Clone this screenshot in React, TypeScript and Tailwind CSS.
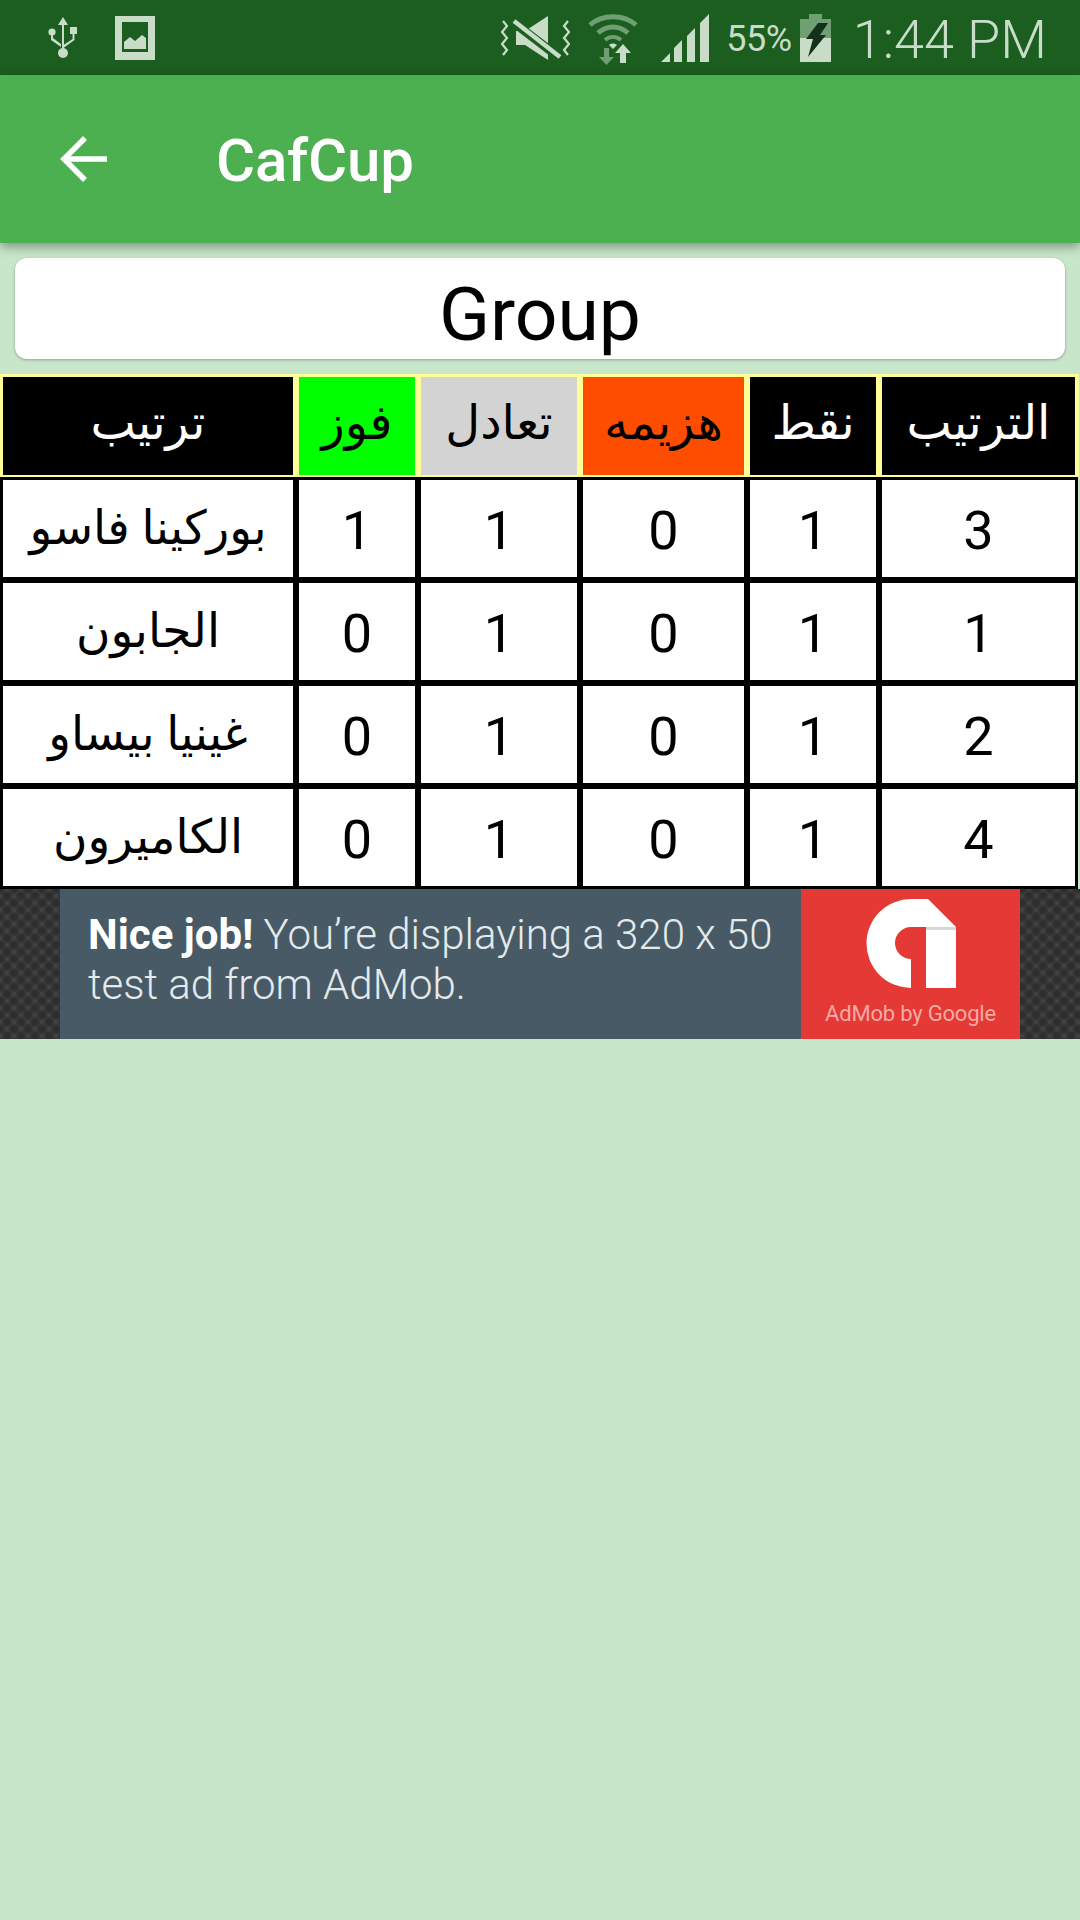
const COLS = "grid grid-cols-[290px_116px_156px_161px_126px_193px] gap-x-[6px]";
const FONT = "font-['Roboto','DejaVu_Sans',sans-serif]";

const HEADERS = [
  { label: "ترتيب", className: "bg-black text-white" },
  { label: "فوز", className: "bg-[#00ff00] text-black" },
  { label: "تعادل", className: "bg-[#d3d3d3] text-black" },
  { label: "هزيمه", className: "bg-[#ff4d00] text-black" },
  { label: "نقط", className: "bg-black text-white" },
  { label: "الترتيب", className: "bg-black text-white" },
];

const ROWS = [
  ["بوركينا فاسو", "1", "1", "0", "1", "3"],
  ["الجابون", "0", "1", "0", "1", "1"],
  ["غينيا بيساو", "0", "1", "0", "1", "2"],
  ["الكاميرون", "0", "1", "0", "1", "4"],
];

function UsbIcon() {
  return (
    <svg width="30" height="42" viewBox="0 0 30 42" fill="#c8dcc8">
      <path d="M14 6h2v26h-2z" />
      <path d="M15 0l5 8H10z" />
      <circle cx="15" cy="36" r="5" />
      <circle cx="4" cy="15" r="3.6" />
      <path d="M22 10h7v7h-7z" />
      <path d="M3 15h2v6l8 6v3L3 23zM24.500 16h2v7l-11 8v-3l9-6z" />
    </svg>
  );
}

function ImageIcon() {
  return (
    <svg width="40" height="44" viewBox="0 0 40 44">
      <path d="M0 0h40v44H0z" fill="#c8dcc8" />
      <path d="M7 6h26v30H7z" fill="#1b5e20" />
      <path d="M9 33v-7l6-5 5 4 7-6 4 3v11z" fill="#c8dcc8" />
    </svg>
  );
}

function MuteVibrateIcon() {
  return (
    <svg width="69" height="44" viewBox="0 0 69 44" fill="none">
      <path d="M15 15h9L47 0v44L24 29h-9z" fill="#c8dcc8" />
      <path d="M12 6l47 36" stroke="#1b5e20" strokeWidth="9" />
      <path d="M13 5l46 36" stroke="#c8dcc8" strokeWidth="4.500" />
      <path d="M2 5l4 5-5 6 5 6-5 6 5 6-4 5M67 5l-4 5 5 6-5 6 5 6-5 6 4 5" stroke="#c8dcc8" strokeWidth="2.200" />
    </svg>
  );
}

function WifiIcon() {
  return (
    <svg width="50" height="54" viewBox="0 0 50 54" fill="none">
      <path d="M2 14C14 3 36 3 48 14" stroke="#6f9f72" strokeWidth="5" />
      <path d="M10 22c9-8 21-8 30 0" stroke="#6f9f72" strokeWidth="5" />
      <path d="M17 29c5-4 11-4 16 0" stroke="#6f9f72" strokeWidth="4" />
      <path d="M21 34c2-2 6-2 8 0l-4 4z" fill="#c8dcc8" />
      <path d="M16 37h5v9h5l-7.500 8-7.500-8h5z" fill="#6f9f72" />
      <path d="M32 52v-10h-5l8-9 8 9h-5v10z" fill="#c8dcc8" />
    </svg>
  );
}

function SignalIcon() {
  return (
    <svg width="48" height="48" viewBox="0 0 48 48" fill="#c8dcc8">
      <path d="M0 48l9-9v9zM13 48V34l8-8v22zM26 48V22l8-8v34zM39 48V9l9-9v48z" />
    </svg>
  );
}

function BatteryIcon() {
  return (
    <svg width="31" height="48" viewBox="0 0 31 48">
      <path d="M9 0h13v5h9v43H0V5h9z" fill="#c8dcc8" />
      <path d="M9 0h13v5h9v19H0V5h9z" fill="#6f9f72" />
      <path d="M18 9h10l-8 12h6L8 43l5-18H6z" fill="#14301a" />
    </svg>
  );
}

function StatusBar() {
  return (
    <div className="h-[75px] bg-[#1b5e20] flex items-center pl-[48px]">
      <div className="flex items-center gap-x-[37px]">
        <UsbIcon />
        <ImageIcon />
      </div>
      <div className="flex items-center ml-auto pr-[33px]">
        <MuteVibrateIcon />
        <div className="ml-[18px]">
          <WifiIcon />
        </div>
        <div className="ml-[23px]">
          <SignalIcon />
        </div>
        <span className="ml-[17px] mt-[2px] text-[36px] text-[#c8dcc8] tracking-[-0.5px] font-['Roboto',sans-serif]">55%</span>
        <div className="ml-[8px]">
          <BatteryIcon />
        </div>
        <span className="ml-[22px] mt-[4px] text-[54px] leading-none font-light text-[#c8dcc8] font-['Roboto',sans-serif]">1:44 PM</span>
      </div>
    </div>
  );
}

function AppBar() {
  return (
    <div className="relative h-[168px] bg-[#4caf50] flex items-center pl-[60px] shadow-[0_4px_10px_rgba(0,0,0,0.35)]">
      <svg width="47" height="46" viewBox="0 0 47 46" fill="none" stroke="#ffffff" strokeWidth="5.500">
        <path d="M47 23H5" />
        <path d="M25 2L4 23l21 21" />
      </svg>
      <span className="ml-[109px] mt-[4px] text-[60px] font-medium tracking-[-0.2px] text-white leading-none font-['Roboto',sans-serif]">CafCup</span>
    </div>
  );
}

function StandingsTable() {
  return (
    <div className="mt-[15px]">
      <div className={`${COLS} bg-[#ffff99] mr-[1px] pl-[3px] pt-[3px] pb-[2px] ${FONT}`}>
        {HEADERS.map((h) => (
          <div key={h.label} className={`h-[98px] pb-[6px] flex items-center justify-center text-[48px] ${h.className}`}>
            {h.label}
          </div>
        ))}
      </div>
      <div className={`${COLS} bg-black mr-[2px] pl-[3px] py-[3px] gap-y-[6px] ${FONT}`}>
        {ROWS.map((row, i) =>
          row.map((cell, j) => (
            <div
              key={`${i}-${j}`}
              className={`h-[97px] bg-white text-black flex items-center justify-center ${j === 0 ? "text-[47px]" : "pt-[4px] text-[54px]"}`}
            >
              {cell}
            </div>
          ))
        )}
      </div>
    </div>
  );
}

function AdBanner() {
  return (
    <div className="h-[150px] flex px-[60px] bg-[#444444] bg-[radial-gradient(circle,#2e2e2e_30%,transparent_65%),radial-gradient(circle,#2e2e2e_30%,transparent_65%)] [background-size:14px_14px] [background-position:0_0,7px_7px]">
      <div className="w-[741px] bg-[#485a66] pl-[28px] pt-[21px] text-[42px] leading-[50px] font-light text-[#e4eaec] font-['Roboto',sans-serif]">
        <div>
          <span className="font-bold text-white">Nice job!</span> You’re displaying a 320 x 50
        </div>
        <div>test ad from AdMob.</div>
      </div>
      <div className="w-[219px] bg-[#e53935] flex flex-col items-center pt-[10px]">
        <svg width="90" height="90" viewBox="0 0 90 90">
          <path d="M45 89A44.500 44.500 0 0 1 45 0H62L90 28V89H60V28H45A16 16 0 0 0 45 60Z" fill="#ffffff" />
          <path d="M60 28H90V31H60Z" fill="#d8d8d8" />
        </svg>
        <span className="mt-[10px] text-[22px] leading-[30px] tracking-[-0.2px] text-[#f6aaa6] font-['Roboto',sans-serif]">AdMob by Google</span>
      </div>
    </div>
  );
}

export default function App() {
  return (
    <div className="min-h-[1920px] bg-[#c8e6c9]">
      <StatusBar />
      <AppBar />
      <div className="mx-[15px] mt-[15px] h-[101px] pt-[12px] rounded-[12px] bg-white shadow-[0_1px_3px_rgba(0,0,0,0.3)] flex items-center justify-center text-[75px] text-black font-['Roboto',sans-serif]">
        Group
      </div>
      <StandingsTable />
      <AdBanner />
    </div>
  );
}
